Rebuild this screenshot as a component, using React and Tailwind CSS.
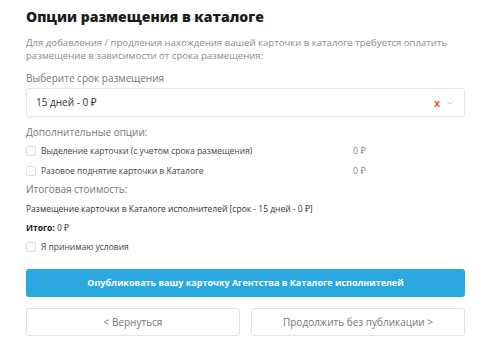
import { ChevronDown } from 'lucide-react';

const font = { fontFamily: '"Open Sans", "Noto Sans", sans-serif' };

function Check({ label, price }) {
  return (
    <div className="grid grid-cols-[327px_auto] items-center h-[14px]">
      <label className="flex items-center gap-[5px] text-[8.5px] leading-[14px] text-[#444]">
        <span className="w-[10px] h-[10px] rounded-[2px] border border-[#dedede] bg-white shrink-0" />
        {label}
      </label>
      {price !== undefined && <span className="text-[9px] text-[#888]">{price}</span>}
    </div>
  );
}

export default function App() {
  return (
    <div className="w-[487px] h-[351px] bg-white pl-[26px] pr-[22px] overflow-hidden" style={font}>
      <h1 className="pt-[7px] text-[14px] leading-[20px] font-extrabold text-[#1c1c1c]">
        Опции размещения в каталоге
      </h1>

      <p className="mt-[9px] text-[9.6px] leading-[13px] text-[#8c8c8c]">
        Для добавления / продления нахождения вашей карточки в каталоге требуется оплатить
        <br />
        размещение в зависимости от срока размещения:
      </p>

      <div className="mt-[9px] text-[10px] leading-[14px] text-[#777]">Выберите срок размещения</div>

      {/* select */}
      <div className="mt-[3px] h-[29px] flex items-center justify-between pl-[9px] pr-[9px] border border-[#e6e6e6] rounded-[3px] shadow-[0_1px_2px_rgba(0,0,0,0.05)]">
        <span className="text-[10px] text-[#333]">15 дней - 0 ₽</span>
        <div className="flex items-center gap-[5px]">
          <span className="text-[10px] leading-none font-bold text-[#f0524f]">x</span>
          <ChevronDown size={10} strokeWidth={1.5} className="text-[#999]" />
        </div>
      </div>

      <div className="mt-[8px] text-[10px] leading-[14px] text-[#777]">Дополнительные опции:</div>

      <div className="mt-[5px]">
        <Check label="Выделение карточки (с учетом срока размещения)" price="0 ₽" />
      </div>
      <div className="mt-[6px]">
        <Check label="Разовое поднятие карточки в Каталоге" price="0 ₽" />
      </div>

      <div className="mt-[4px] text-[10px] leading-[14px] text-[#777]">Итоговая стоимость:</div>

      <div className="mt-[6px] text-[8.5px] leading-[14px] text-[#333]">
        Размещение карточки в Каталоге исполнителей [срок - 15 дней - 0 ₽]
      </div>

      <div className="mt-[5px] text-[8.5px] leading-[14px] text-[#333]">
        <b className="text-[#111]">Итого:</b> 0 ₽
      </div>

      <div className="mt-[5px]">
        <Check label="Я принимаю условия" />
      </div>

      <button className="mt-[15px] w-full h-[28px] rounded-[3px] bg-[#29a9e0] text-white text-[9px] font-bold">
        Опубликовать вашу карточку Агентства в Каталоге исполнителей
      </button>

      <div className="mt-[11px] grid grid-cols-2 gap-[11px]">
        <button className="h-[28px] rounded-[3px] border border-[#e3e3e3] bg-white text-[10px] text-[#777]">
          &lt; Вернуться
        </button>
        <button className="h-[28px] rounded-[3px] border border-[#e3e3e3] bg-white text-[10px] text-[#777]">
          Продолжить без публикации &gt;
        </button>
      </div>
    </div>
  );
}
